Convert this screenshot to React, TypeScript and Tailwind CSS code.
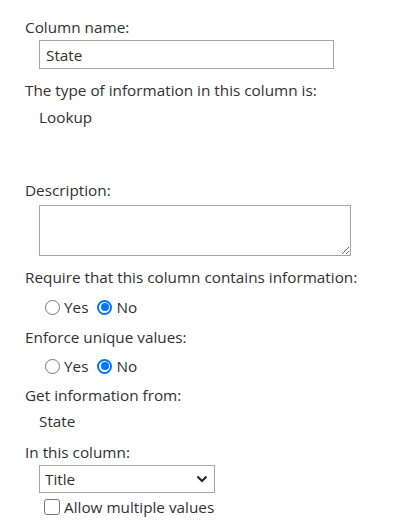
import React from "react";

function Radio({ checked, label }: { checked?: boolean; label: string }) {
  return (
    <span className="flex items-center">
      {checked ? (
        <span className="w-[15px] h-[15px] rounded-full border-[2px] border-[#0075ff] flex items-center justify-center">
          <span className="w-[8px] h-[8px] rounded-full bg-[#0075ff]" />
        </span>
      ) : (
        <span className="w-[15px] h-[15px] rounded-full border border-[#767676] bg-white" />
      )}
      <span className="ml-[4px]">{label}</span>
    </span>
  );
}

function RadioRow() {
  return (
    <div className="flex items-center h-[20px] pl-[20px] gap-[9px]">
      <Radio label="Yes" />
      <Radio checked label="No" />
    </div>
  );
}

export default function App() {
  return (
    <div
      className="w-[398px] h-[522px] bg-white text-[#323130] text-[15.3px] leading-[20px] pl-[25px] pt-[17px] flex flex-col"
      style={{ fontFamily: '"Open Sans", "Noto Sans", sans-serif' }}
    >
      <div className="h-[20px]">Column name:</div>
      <div className="mt-[3px] ml-[14px] w-[295px] h-[29px] border border-[#a6a6a6] flex items-center pl-[6px]">
        State
      </div>
      <div className="mt-[11px] h-[20px]">The type of information in this column is:</div>
      <div className="mt-[7px] h-[20px] pl-[14px]">Lookup</div>
      <div className="mt-[53px] h-[20px]">Description:</div>
      <textarea
        readOnly
        className="mt-[5px] ml-[14px] w-[312px] h-[51px] border border-[#a6a6a6] block outline-none"
      />
      <div className="mt-[11px] h-[20px]">Require that this column contains information:</div>
      <div className="mt-[10px]">
        <RadioRow />
      </div>
      <div className="mt-[10px] h-[20px]">Enforce unique values:</div>
      <div className="mt-[9px]">
        <RadioRow />
      </div>
      <div className="mt-[9px] h-[20px]">Get information from:</div>
      <div className="mt-[6px] h-[20px] pl-[14px]">State</div>
      <div className="mt-[11px] h-[20px]">In this column:</div>
      <div className="mt-[3px] ml-[14px] w-[176px] h-[28px] border border-[#a6a6a6] flex items-center justify-between pl-[5px] pr-[6px]">
        <span>Title</span>
        <svg width="12" height="8" viewBox="0 0 12 8">
          <path d="M1.5 1.5 L6 6 L10.5 1.5" fill="none" stroke="#222" strokeWidth="2" />
        </svg>
      </div>
      <div className="mt-[4px] h-[20px] flex items-center pl-[19px]">
        <span className="w-[16px] h-[16px] rounded-[3px] border border-[#767676] bg-white" />
        <span className="ml-[4px]">Allow multiple values</span>
      </div>
    </div>
  );
}
